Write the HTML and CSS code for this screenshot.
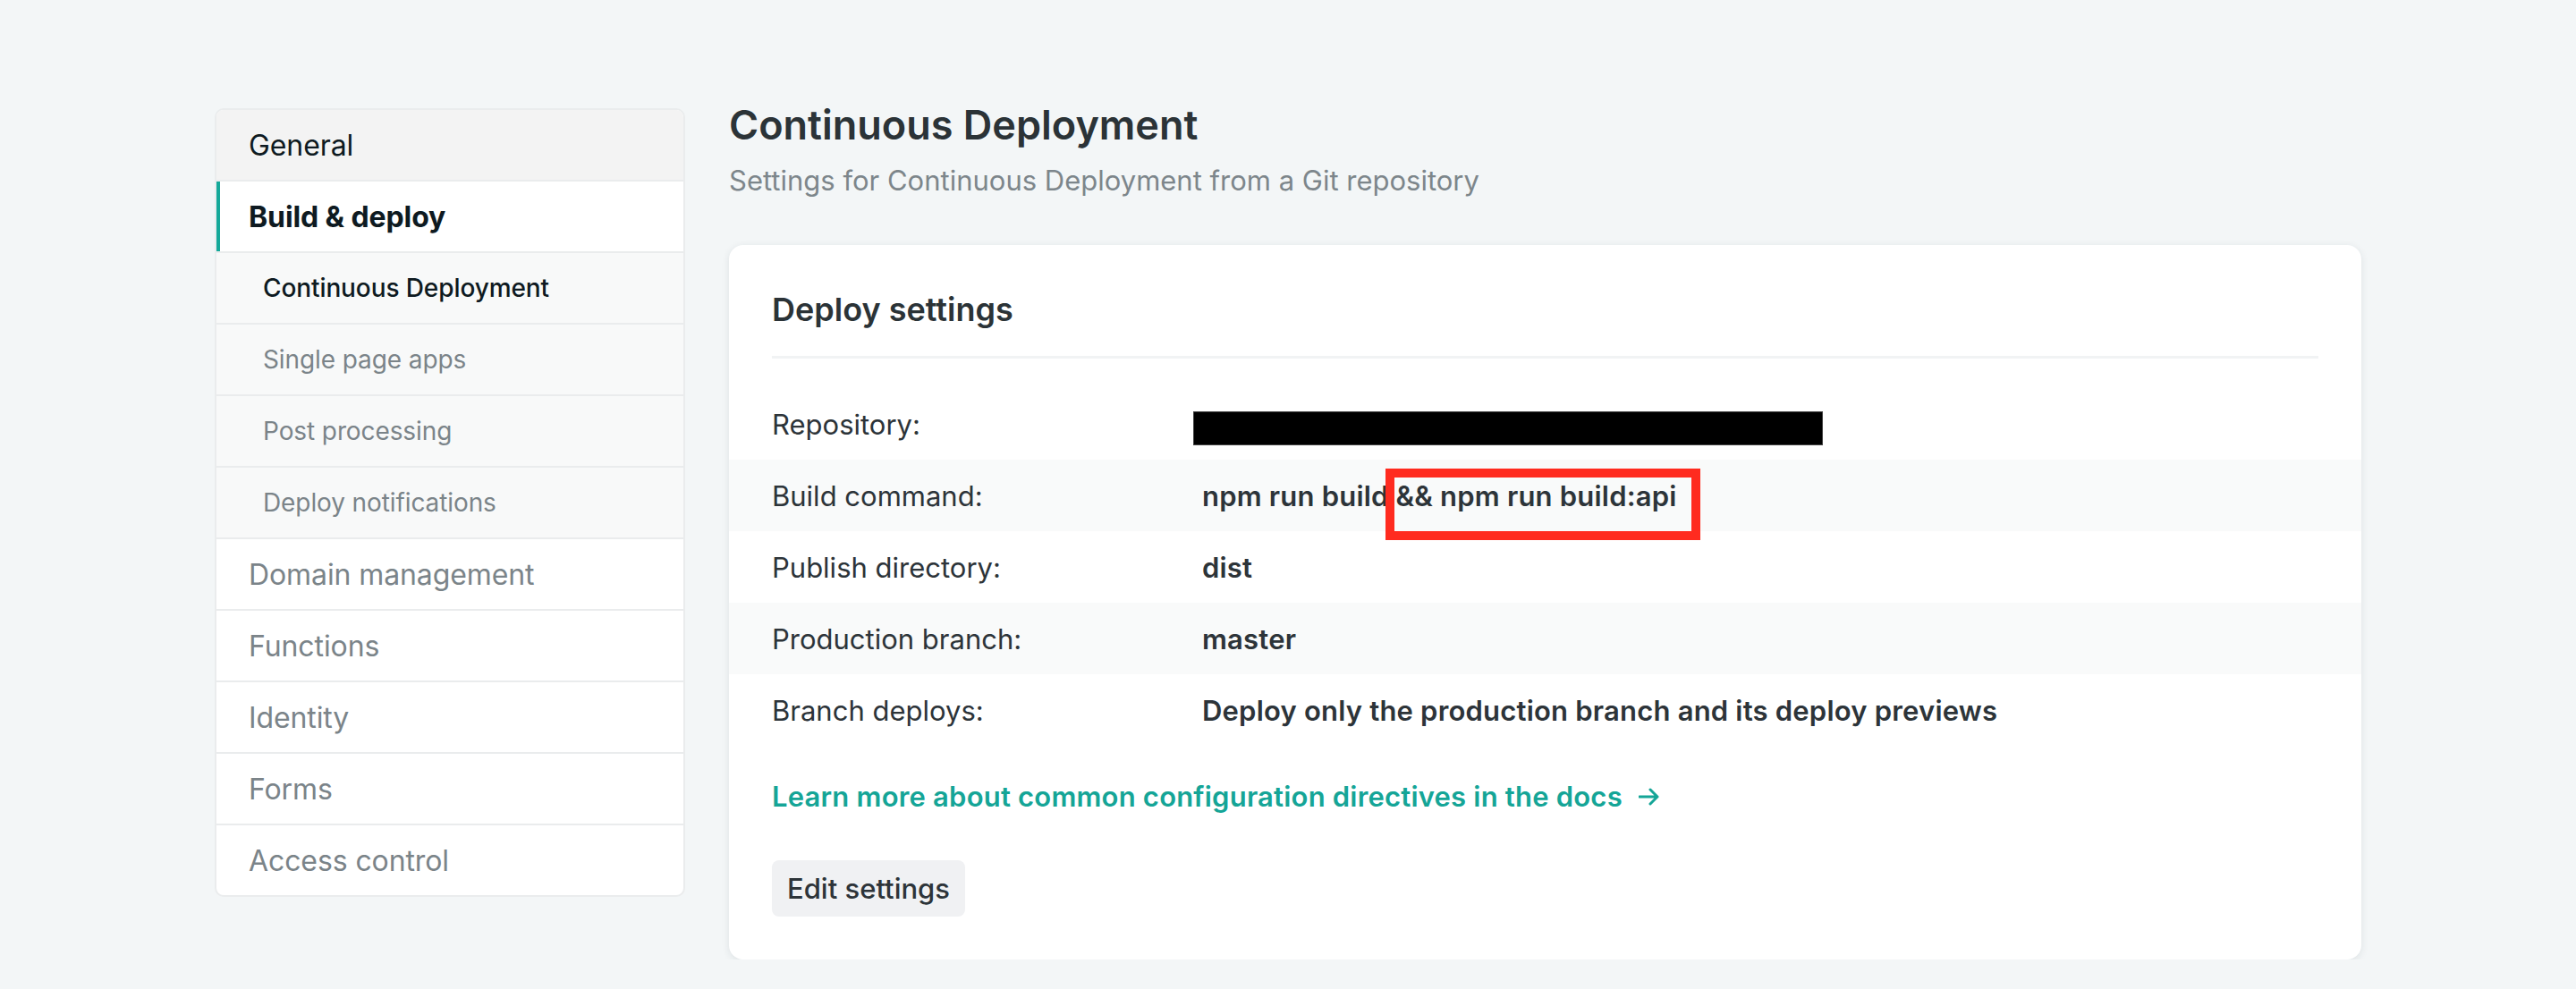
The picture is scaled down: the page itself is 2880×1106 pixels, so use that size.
FILE: index.html
```html
<!DOCTYPE html>
<html lang="en">
<head>
<meta charset="utf-8">
<title>Build & deploy settings</title>
<link rel="stylesheet" href="styles.css">
</head>
<body>
<div class="layout">
  <nav class="sidenav">
    <a class="nav-item nav-head">General</a>
    <a class="nav-item nav-active">Build &amp; deploy</a>
    <a class="nav-item nav-sub nav-sub-current">Continuous Deployment</a>
    <a class="nav-item nav-sub">Single page apps</a>
    <a class="nav-item nav-sub">Post processing</a>
    <a class="nav-item nav-sub">Deploy notifications</a>
    <a class="nav-item">Domain management</a>
    <a class="nav-item">Functions</a>
    <a class="nav-item">Identity</a>
    <a class="nav-item">Forms</a>
    <a class="nav-item">Access control</a>
  </nav>
  <main class="content">
    <h1 class="page-title">Continuous Deployment</h1>
    <p class="page-sub">Settings for Continuous Deployment from a Git repository</p>
    <section class="card">
      <h2 class="card-title">Deploy settings</h2>
      <dl class="settings">
        <div class="row">
          <dt>Repository:</dt>
          <dd><span class="redacted"></span></dd>
        </div>
        <div class="row row-alt">
          <dt>Build command:</dt>
          <dd>npm run build <span class="hl">&amp;&amp; npm run build:api</span></dd>
        </div>
        <div class="row">
          <dt>Publish directory:</dt>
          <dd>dist</dd>
        </div>
        <div class="row row-alt">
          <dt>Production branch:</dt>
          <dd>master</dd>
        </div>
        <div class="row">
          <dt>Branch deploys:</dt>
          <dd>Deploy only the production branch and its deploy previews</dd>
        </div>
      </dl>
      <a class="docs-link">Learn more about common configuration directives in the docs<svg class="arrow" viewBox="0 0 24 20" width="24" height="20"><path d="M1 10h20M13 2l8 8-8 8" fill="none" stroke="currentColor" stroke-width="3" stroke-linecap="round" stroke-linejoin="round"/></svg></a>
      <div class="actions">
        <button class="btn">Edit settings</button>
      </div>
    </section>
  </main>
</div>
</body>
</html>
```

FILE: styles.css
```css
* { box-sizing: border-box; }
html, body { margin: 0; padding: 0; }
body {
  background: #f3f6f7;
  font-family: Inter, "Noto Sans", "Liberation Sans", sans-serif;
  color: #2d3439;
}
.layout {
  width: 2400px;
  margin: 0 auto;
  padding-top: 112px;
  display: flex;
  gap: 49px;
  align-items: flex-start;
}
.sidenav {
  width: 526px;
  flex: none;
  margin-top: 9px;
  background: #fff;
  border: 2px solid #eaeced;
  border-radius: 10px;
  overflow: hidden;
  display: flex;
  flex-direction: column;
}
.nav-item {
  display: flex;
  align-items: center;
  height: 80px;
  padding-left: 36px;
  border-bottom: 2px solid #eaeced;
  font-size: 32px;
  color: #7b8489;
  letter-spacing: -0.1px;
}
.nav-item:last-child { border-bottom: none; height: 78px; }
.nav-head { background: #f3f3f3; color: #0e1a21; }
.nav-active {
  color: #0e1a21;
  font-weight: 700;
  box-shadow: inset 4px 0 0 #15a99a;
}
.nav-sub {
  background: #f8f9f9;
  padding-left: 52px;
  font-size: 28px;
  font-weight: 400;
}
.nav-sub-current { color: #0e1a21; font-weight: 500; }

.content { flex: 1; min-width: 0; }
.page-title {
  margin: 0;
  font-size: 45px;
  line-height: 56px;
  font-weight: 600;
  color: #2b3337;
}
.page-sub {
  margin: 12px 0 0;
  font-size: 31px;
  line-height: 44px;
  color: #7d868b;
}
.card {
  margin-top: 50px;
  background: #fff;
  border-radius: 16px;
  box-shadow: 0 2px 8px rgba(30, 45, 55, 0.10);
  padding: 48px 0 48px;
}
.card-title {
  margin: 0 48px;
  font-size: 36px;
  line-height: 48px;
  font-weight: 600;
  color: #2b3337;
  padding-bottom: 28px;
  border-bottom: 3px solid #f1f3f4;
}
.settings { margin: 33px 0 0; }
.row {
  display: flex;
  align-items: center;
  height: 80px;
  padding: 0 48px;
  font-size: 31px;
}
.row-alt { background: #f9fafa; }
.row dt { width: 481px; flex: none; color: #2d3439; }
.row dd { margin: 0; font-weight: 600; color: #2d3439; letter-spacing: 0.2px; }
.redacted {
  display: block;
  width: 704px;
  height: 38px;
  margin-left: -10px;
  margin-top: 10px;
  background: #000;
  border: 1px solid #444;
}
.hl { position: relative; }
.hl::after {
  content: "";
  position: absolute;
  left: -12px;
  right: -26px;
  top: 50%;
  height: 60px;
  margin-top: -30px;
  border: 10px solid #ff2b1f;
}
.docs-link {
  display: flex;
  align-items: center;
  gap: 18px;
  margin: 35px 48px 0;
  font-size: 31px;
  line-height: 44px;
  font-weight: 600;
  color: #15a597;
  letter-spacing: 0.2px;
}
.arrow { width: 24px; height: 20px; flex: none; }
.actions { margin: 49px 48px 0; }
.btn {
  font-family: inherit;
  font-size: 31px;
  font-weight: 500;
  color: #2d3439;
  background: #f0f1f3;
  border: none;
  border-radius: 8px;
  height: 63px;
  padding: 0 17px;
}
```
